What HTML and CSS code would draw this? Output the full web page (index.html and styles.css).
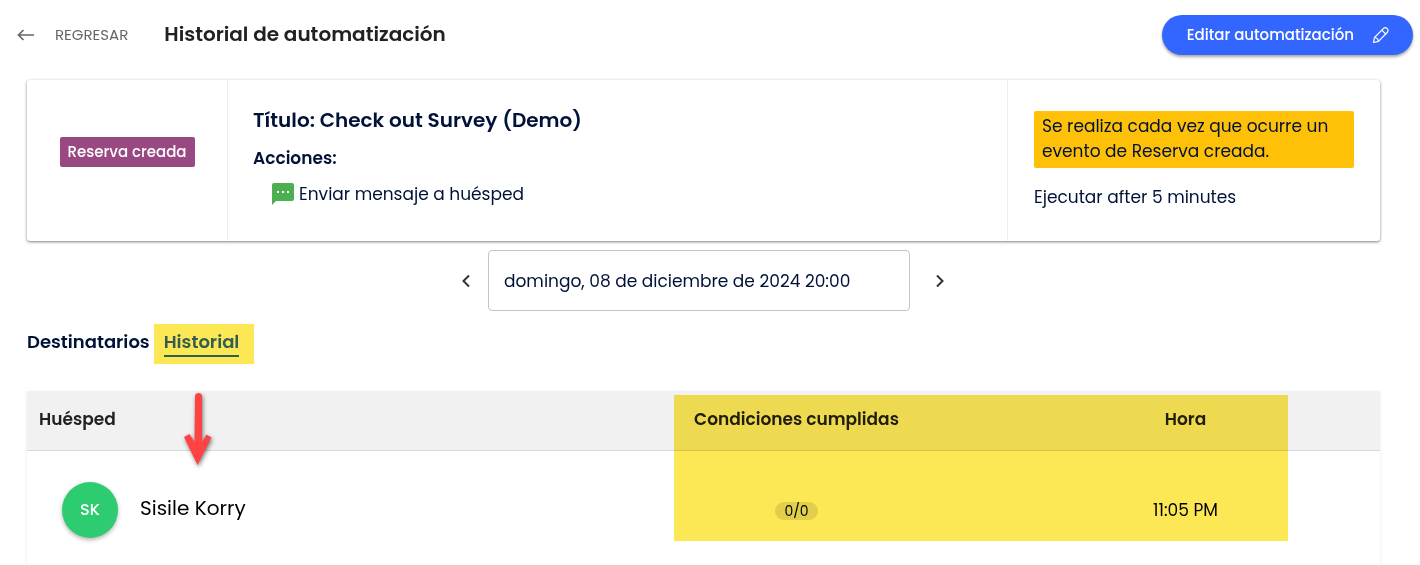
FILE: index.html
```html
<!DOCTYPE html>
<html lang="es">
<head>
    <meta charset="UTF-8">
    <meta name="viewport" content="width=device-width, initial-scale=1.0">
    <title>Historial de automatización</title>
    <link rel="stylesheet" href="styles.css">
</head>
<body>
    <header class="page-header">
        <a class="back-link" href="#">
            <svg class="back-icon" width="18" height="12" viewBox="0 0 18 12" fill="none" stroke="currentColor" stroke-width="1.7">
                <path d="M17 6H1.500M6.500 1L1.500 6l5 5"/>
            </svg>
            REGRESAR
        </a>
        <h1>Historial de automatización</h1>
        <button class="edit-btn" type="button">
            Editar automatización
            <svg width="18" height="18" viewBox="0 0 18 18" fill="none" stroke="currentColor" stroke-width="1.2" stroke-linejoin="round">
                <path d="M1.500 16.500l1-5L11.300 2.600a2.700 2.700 0 0 1 3.900 3.900L6.500 15.400z"/>
                <path d="M2.600 11.500c2 .2 3.500 1.800 3.900 3.900M9.800 4.100l3.900 3.900"/>
            </svg>
        </button>
    </header>

    <main>
        <section class="summary">
            <div class="summary-event">
                <span class="event-tag">Reserva creada</span>
            </div>
            <div class="summary-info">
                <h2>Título: Check out Survey (Demo)</h2>
                <h3>Acciones:</h3>
                <div class="action">
                    <svg width="22" height="22" viewBox="0 0 22 22">
                        <path fill="#4caf50" d="M2 0h18a2 2 0 0 1 2 2v14a2 2 0 0 1-2 2H4l-4 4V2a2 2 0 0 1 2-2z"/>
                        <path fill="#fff" d="M5 8h2v2H5zM10 8h2v2h-2zM15 8h2v2h-2z"/>
                    </svg>
                    Enviar mensaje a huésped
                </div>
            </div>
            <div class="summary-trigger">
                <p class="trigger-note">Se realiza cada vez que ocurre un evento de Reserva creada.</p>
                <p class="trigger-delay">Ejecutar after 5 minutes</p>
            </div>
        </section>

        <div class="date-nav">
            <button class="nav-btn" type="button" aria-label="Anterior">
                <svg width="8" height="14" viewBox="0 0 8 14" fill="none" stroke="currentColor" stroke-width="2">
                    <path d="M7 1.500L1.500 7 7 12.500"/>
                </svg>
            </button>
            <input class="date-input" type="text" aria-label="Fecha" value="domingo, 08 de diciembre de 2024 20:00">
            <button class="nav-btn" type="button" aria-label="Siguiente">
                <svg width="8" height="14" viewBox="0 0 8 14" fill="none" stroke="currentColor" stroke-width="2">
                    <path d="M1 1.500L6.500 7 1 12.500"/>
                </svg>
            </button>
        </div>

        <nav class="tabs">
            <a class="tab" href="#">Destinatarios</a>
            <span class="tab-mark"><a class="tab active" href="#">Historial</a></span>
        </nav>

        <div class="history">
            <table>
                <thead>
                    <tr>
                        <th class="col-guest">Huésped</th>
                        <th class="col-conditions">Condiciones cumplidas</th>
                        <th class="col-time">Hora</th>
                    </tr>
                </thead>
                <tbody>
                    <tr>
                        <td class="col-guest">
                            <div class="guest">
                                <span class="avatar">SK</span>
                                <span class="guest-name">Sisile Korry</span>
                            </div>
                        </td>
                        <td class="col-conditions"><span class="count">0/0</span></td>
                        <td class="col-time">11:05 PM</td>
                    </tr>
                </tbody>
            </table>
            <div class="highlight"></div>
            <svg class="arrow" width="36" height="80" viewBox="0 0 36 80">
                <path fill="#ff4343" d="M16 5.500a3.500 3.500 0 0 1 7 0V51l4.500-7.500 5 3L18.500 74 5 46l5.500-3L15.500 51z"/>
            </svg>
        </div>
    </main>
</body>
</html>
```

FILE: styles.css
```css
* {
    box-sizing: border-box;
}
body {
    margin: 0;
    background: #fff;
    color: #001238;
    font-family: Poppins, Inter, "Open Sans", sans-serif;
    font-size: 17px;
    line-height: 24px;
}
h1, h2, h3, p {
    margin: 0;
}
a {
    color: inherit;
    text-decoration: none;
}
button, input {
    font: inherit;
}
svg {
    flex: none;
}

.page-header {
    display: flex;
    align-items: center;
    height: 70px;
    padding: 0 7px 0 17px;
}
.back-link {
    display: flex;
    align-items: center;
    gap: 20px;
    color: #666;
    font-size: 15px;
}
.page-header h1 {
    margin-left: 36px;
    padding-bottom: 2px;
    color: #212121;
    font-size: 20px;
    font-weight: 600;
}
.edit-btn {
    display: flex;
    align-items: center;
    gap: 18px;
    height: 40px;
    margin-left: auto;
    padding: 0 23px 0 25px;
    border: 0;
    border-radius: 20px;
    background: #3366ff;
    color: #fff;
    font-size: 15px;
    font-weight: 500;
    box-shadow: 0 2px 3px rgba(0, 0, 0, 0.35);
    cursor: pointer;
}

main {
    padding: 10px 40px 0 27px;
}

.summary {
    display: flex;
    height: 161px;
    border-radius: 3px;
    box-shadow: 0 1px 3px rgba(0, 0, 0, 0.5);
}
.summary-event {
    display: flex;
    align-items: center;
    justify-content: center;
    width: 201px;
    padding-bottom: 18px;
    border-right: 1px solid #eee;
}
.event-tag {
    padding: 3px 8px;
    border-radius: 2px;
    background: #994882;
    color: #fff;
    font-size: 15px;
    font-weight: 500;
}
.summary-info {
    flex: 1;
    padding: 24px 25px;
}
.summary-info h2 {
    font-size: 20px;
    font-weight: 600;
    line-height: 32px;
}
.summary-info h3 {
    margin-top: 10px;
    font-size: 17px;
    font-weight: 600;
}
.action {
    display: flex;
    align-items: center;
    gap: 5px;
    margin-top: 12px;
    padding-left: 19px;
}
.summary-trigger {
    width: 373px;
    padding: 31px 26px 0;
    border-left: 1px solid #eee;
}
.trigger-note {
    padding: 3px 8px 4px;
    border-radius: 2px;
    background: #ffc107;
    line-height: 25px;
}
.trigger-delay {
    margin-top: 17px;
}

.date-nav {
    display: flex;
    justify-content: center;
    align-items: center;
    margin-top: 9px;
    padding-left: 7px;
}
.nav-btn {
    display: flex;
    justify-content: center;
    width: 44px;
    padding: 10px 0;
    border: 0;
    background: none;
    color: #333;
    cursor: pointer;
}
.nav-btn:last-child {
    width: 60px;
}
.date-input {
    width: 422px;
    height: 61px;
    padding: 0 15px;
    border: 1px solid #c4c4c4;
    border-radius: 4px;
    background: #fff;
    color: #001238;
}

.tabs {
    display: flex;
    align-items: flex-start;
    gap: 4px;
    margin-top: 13px;
    font-size: 18px;
    font-weight: 600;
}
.tabs > .tab {
    padding-top: 6px;
}
.tab-mark {
    height: 40px;
    padding: 6px 15px 0 10px;
    background: #fce754;
}
.tab.active {
    display: block;
    padding-bottom: 1px;
    border-bottom: 2px solid #325c54;
    color: #325c54;
}

.history {
    position: relative;
    margin-top: 27px;
    box-shadow: 0 1px 3px rgba(0, 0, 0, 0.1);
}
table {
    width: 100%;
    border-collapse: separate;
    border-spacing: 0;
    table-layout: fixed;
}
th {
    height: 60px;
    padding: 0 12px 4px;
    border-bottom: 1px solid #d8d8d8;
    background: #f1f1f1;
    color: #212121;
    font-weight: 600;
}
td {
    height: 114px;
    padding: 4px 12px 0;
    color: #000;
}
.col-conditions, .col-time {
    width: 389px;
    text-align: center;
}
.col-guest {
    text-align: left;
}
.guest {
    display: flex;
    align-items: center;
    gap: 22px;
    padding-left: 23px;
}
.avatar {
    display: flex;
    align-items: center;
    justify-content: center;
    width: 56px;
    height: 56px;
    border-radius: 50%;
    background: #2ecc71;
    color: #fff;
    font-size: 16px;
    font-weight: 500;
    box-shadow: 0 2px 4px rgba(0, 0, 0, 0.3);
}
.guest-name {
    padding-bottom: 4px;
    font-size: 20px;
}
.count {
    display: inline-block;
    padding: 0 9px;
    border-radius: 9px;
    background: #e4e4e4;
    font-size: 14px;
    line-height: 18px;
}

/* marker over the conditions and time columns */
.highlight {
    position: absolute;
    top: 4px;
    right: 92px;
    width: 614px;
    height: 146px;
    background: #fce754;
    mix-blend-mode: multiply;
    pointer-events: none;
}
.arrow {
    position: absolute;
    top: 0;
    left: 152px;
    filter: drop-shadow(1px 2px 2px rgba(0, 0, 0, 0.5));
}
```
